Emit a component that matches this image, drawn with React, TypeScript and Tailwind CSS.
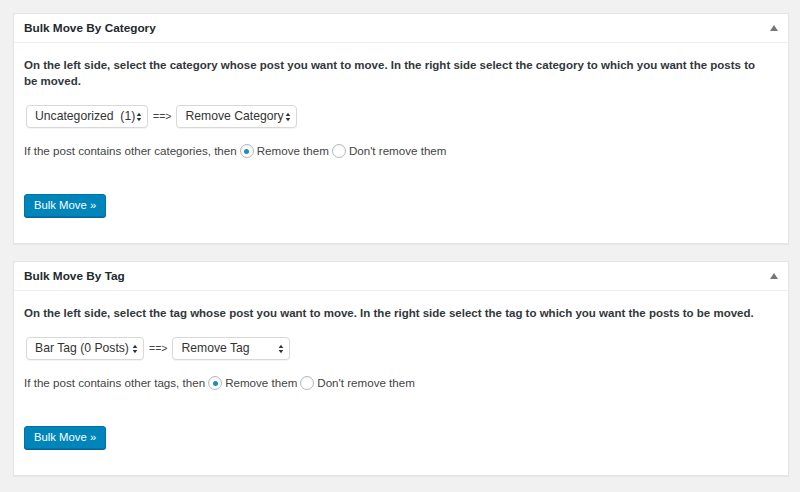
import React from "react";

function Arrows() {
  return (
    <svg width="6" height="10" viewBox="0 0 6 10" className="shrink-0">
      <path d="M3 0.8 L5.3 4 H0.7 Z" fill="#333" />
      <path d="M3 9.2 L5.3 6 H0.7 Z" fill="#333" />
    </svg>
  );
}

function Select({ label, width }: { label: string; width: string }) {
  return (
    <div
      className={`flex h-[23px] items-center justify-between rounded-[4px] border border-[#d8d8d8] bg-white pl-[8px] pr-[5px] text-[12.2px] text-[#333] shadow-[0_1px_1px_rgba(0,0,0,0.05)] ${width}`}
    >
      <span className="whitespace-pre">{label}</span>
      <Arrows />
    </div>
  );
}

function Radio({ checked, label }: { checked?: boolean; label: string }) {
  return (
    <span className="inline-flex items-center gap-[3px]">
      <span className="flex h-[14px] w-[14px] items-center justify-center rounded-full border border-[#b4b9be] bg-white shadow-[inset_0_1px_2px_rgba(0,0,0,0.07)]">
        {checked ? <span className="h-[5px] w-[5px] rounded-full bg-[#1e8cbe]" /> : null}
      </span>
      <span>{label}</span>
    </span>
  );
}

function Postbox({
  title,
  description,
  left,
  leftWidth,
  right,
  rightWidth,
  kind,
}: {
  title: string;
  description: string;
  left: string;
  leftWidth: string;
  right: string;
  rightWidth: string;
  kind: string;
}) {
  return (
    <section className="border border-[#e5e5e5] bg-white shadow-[0_1px_1px_rgba(0,0,0,0.04)]">
      <div className="flex h-[29px] items-center justify-between border-b border-[#eee] pl-[10px] pr-[10px]">
        <h3 className="pt-[2px] text-[11.8px] font-bold text-[#23282d]">{title}</h3>
        <svg width="8" height="6" viewBox="0 0 8 6">
          <path d="M4 0 L8 6 H0 Z" fill="#72777c" />
        </svg>
      </div>

      <div className="px-[10px] pb-[26px] pt-[14px] text-[11.6px] text-[#444]">
        <p className="pr-[20px] text-[11.5px] font-bold leading-[16px] text-[#32373c]">{description}</p>

        <div className="mt-[16px] flex items-center gap-[5px] pl-[2px]">
          <Select label={left} width={leftWidth} />
          <span className="text-[10.5px]">==&gt;</span>
          <Select label={right} width={rightWidth} />
        </div>

        <p className="mt-[14px] flex items-center gap-[3px] leading-[18px]">
          <span>If the post contains other {kind}, then</span>
          <Radio checked label="Remove them" />
          <Radio label="Don't remove them" />
        </p>

        <button
          type="button"
          className="mt-[34px] h-[23px] rounded-[3px] border border-[#0073aa] bg-[#0085ba] px-[9px] text-[11.3px] text-white shadow-[0_1px_0_#006799]"
        >
          Bulk Move »
        </button>
      </div>
    </section>
  );
}

export default function App() {
  return (
    <div className="min-h-screen bg-[#f1f1f1] pl-[13px] pr-[11px] pt-[13px] font-['Liberation_Sans',Arial,sans-serif]">
      <div className="flex flex-col gap-[17px]">
        <Postbox
          title="Bulk Move By Category"
          description="On the left side, select the category whose post you want to move. In the right side select the category to which you want the posts to be moved."
          left="Uncategorized  (1)"
          leftWidth="w-[122px]"
          right="Remove Category"
          rightWidth="w-[121px]"
          kind="categories"
        />
        <Postbox
          title="Bulk Move By Tag"
          description="On the left side, select the tag whose post you want to move. In the right side select the tag to which you want the posts to be moved."
          left="Bar Tag (0 Posts)"
          leftWidth="w-[118px]"
          right="Remove Tag"
          rightWidth="w-[118px]"
          kind="tags"
        />
      </div>
    </div>
  );
}
